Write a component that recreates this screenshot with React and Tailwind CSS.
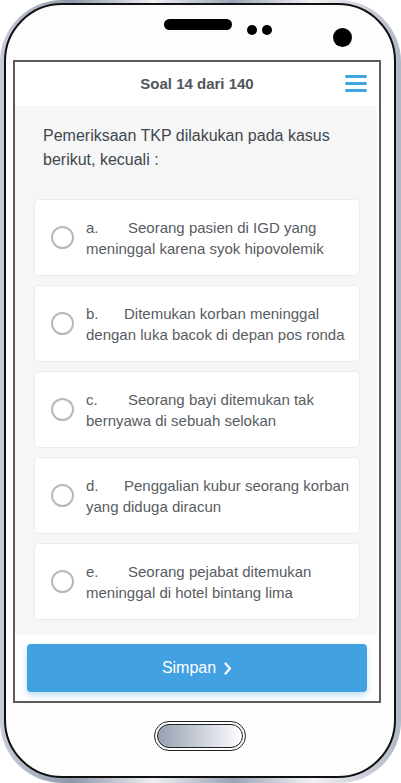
const options = [
  { key: 'a.', pad: 'w-[42px]', l1: 'Seorang pasien di IGD yang', l2: 'meninggal karena syok hipovolemik' },
  { key: 'b.', pad: 'w-[38px]', l1: 'Ditemukan korban meninggal', l2: 'dengan luka bacok di depan pos ronda' },
  { key: 'c.', pad: 'w-[42px]', l1: 'Seorang bayi ditemukan tak', l2: 'bernyawa di sebuah selokan' },
  { key: 'd.', pad: 'w-[38px]', l1: 'Penggalian kubur seorang korban', l2: 'yang diduga diracun' },
  { key: 'e.', pad: 'w-[42px]', l1: 'Seorang pejabat ditemukan', l2: 'meninggal di hotel bintang lima' },
];

function Option({ opt }) {
  return (
    <div className="h-[77px] rounded-[5px] bg-white border border-[#ececec] flex items-center pl-[16px] pr-[4px]">
      <div className="w-[23px] h-[23px] shrink-0 rounded-full border-2 border-[#b4b9bf] bg-white" />
      <div className="ml-[12px] text-[15px] leading-[21px] text-[#575c62] whitespace-nowrap">
        <div>
          <span className={`inline-block ${opt.pad}`}>{opt.key}</span>
          {opt.l1}
        </div>
        <div>{opt.l2}</div>
      </div>
    </div>
  );
}

export default function App() {
  return (
    <div className="w-[401px] h-[783px] bg-white" style={{ fontFamily: '"Liberation Sans", Arial, sans-serif' }}>
      <div className="w-[401px] h-[783px] rounded-[62px] pt-[3px] pl-[4px] pr-[5px] pb-[5px] bg-[linear-gradient(90deg,#c8ced8,#8e97a9_18%,#eef0f3_38%,#9aa3b5_58%,#f1f2f5_78%,#b1b8c6)]">
        <div className="h-full rounded-[58px] border-2 border-[#111] bg-[#fdfdfd] flex flex-col">
          {/* top bezel */}
          <div className="h-[55px] shrink-0 flex items-start">
            <div className="ml-[158px] mt-[14px] w-[68px] h-[11px] rounded-full bg-black" />
            <div className="ml-[15px] mt-[20px] w-[10px] h-[10px] rounded-full bg-black" />
            <div className="ml-[5px] mt-[20px] w-[10px] h-[10px] rounded-full bg-black" />
            <div className="ml-[61px] mt-[23px] w-[19px] h-[19px] rounded-full bg-black" />
          </div>

          {/* screen */}
          <div className="ml-[7px] w-[368px] h-[643px] shrink-0 border-2 border-[#5c5c5c] bg-white flex flex-col">
            <div className="h-[44px] shrink-0 bg-white flex items-center relative">
              <div className="w-full text-center text-[15px] font-bold text-[#50565c]">Soal 14 dari 140</div>
              <div className="absolute right-[12px] top-[13px] flex flex-col gap-[4px]">
                <div className="w-[22px] h-[3px] rounded-full bg-[#3fa3e4]" />
                <div className="w-[22px] h-[3px] rounded-full bg-[#3fa3e4]" />
                <div className="w-[22px] h-[3px] rounded-full bg-[#3fa3e4]" />
              </div>
            </div>

            <div className="h-[529px] shrink-0 pr-[2px] bg-white">
              <div className="h-full bg-[#f6f6f6] pt-[18px] pb-[15px]">
                <p className="pl-[28px] text-[16px] leading-[24px] text-[#40474f]">
                  Pemeriksaan TKP dilakukan pada kasus
                  <br />
                  berikut, kecuali :
                </p>
                <div className="mt-[27px] pl-[19px] pr-[17px] flex flex-col gap-[9px]">
                  {options.map((o) => (
                    <Option key={o.key} opt={o} />
                  ))}
                </div>
              </div>
            </div>

            <div className="h-[66px] shrink-0 bg-white px-[12px] pt-[9px]">
              <button className="w-full h-[48px] rounded-[4px] bg-[#42a1e1] shadow-[0_3px_6px_rgba(66,161,225,0.35)] flex items-center justify-center gap-[8px] text-white text-[16px]">
                <span>Simpan</span>
                <svg width="8" height="13" viewBox="0 0 8 13" fill="none">
                  <path d="M1.5 1.5L6 6.5L1.5 11.5" stroke="white" strokeWidth="2.2" strokeLinecap="round" strokeLinejoin="round" />
                </svg>
              </button>
            </div>
          </div>

          {/* bottom bezel */}
          <div className="flex-1 flex justify-center pt-[18px]">
            <div className="w-[92px] h-[30px] rounded-full border border-[#222] p-[2px] bg-white">
              <div className="w-full h-full rounded-full border border-[#222] bg-[linear-gradient(90deg,#97a1b5,#d4d8e0_60%,#ffffff)]" />
            </div>
          </div>
        </div>
      </div>
    </div>
  );
}
